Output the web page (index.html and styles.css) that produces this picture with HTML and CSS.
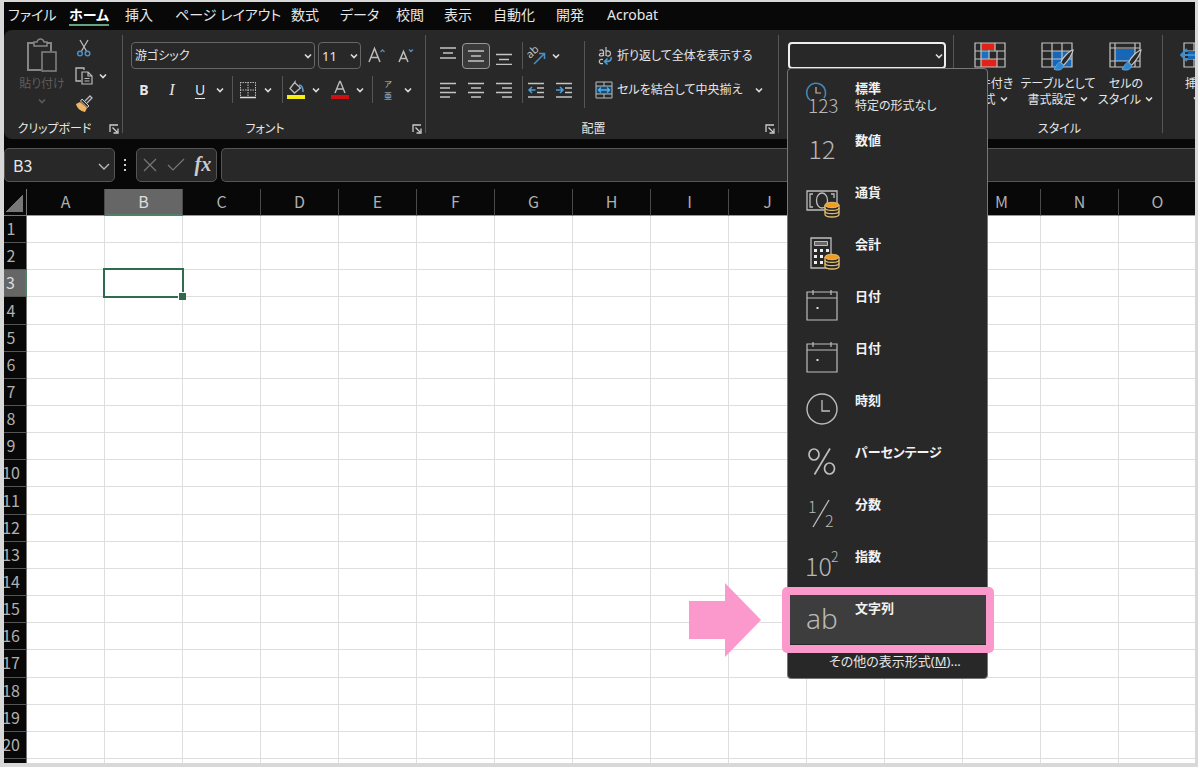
FILE: index.html
```html
<!DOCTYPE html>
<html lang="ja">
<head>
<meta charset="utf-8">
<title>表計算</title>
<link rel="stylesheet" href="styles.css">
</head>
<body>
<svg class="defs" aria-hidden="true">
  <symbol id="chev" viewBox="0 0 10 10"><path d="M2 3.5 5 6.5 8 3.5" fill="none" stroke="currentColor" stroke-width="1.6"/></symbol>
  <symbol id="chev-thin" viewBox="0 0 14 14"><path d="M2 5 7 10 12 5" fill="none" stroke="currentColor" stroke-width="1.4"/></symbol>
  <symbol id="launch" viewBox="0 0 10 10"><path d="M1 8V1h8M3.5 3.5 8 8M9 4.5V9H4.5" fill="none" stroke="#ccc" stroke-width="1.3"/></symbol>
  <symbol id="coins" viewBox="0 0 16 16"><path d="M1 3.500v9.500c0 3.300 14 3.300 14 0V3.500" fill="#282828" stroke="#e3bd6d" stroke-width="1.300"/><path d="M1 6.500c0 3.200 14 3.200 14 0M1 9.800c0 3.200 14 3.200 14 0" fill="none" stroke="#e3bd6d" stroke-width="1.300"/><ellipse cx="8" cy="3.500" rx="7" ry="2.700" fill="#f39c1f" stroke="#e3bd6d"/></symbol>
  <symbol id="calendar" viewBox="0 0 32 32"><path d="M1 3h30v28H1zM1 9h30M7 1v5M25 1v5" fill="none" stroke="#bdbdbd" stroke-width="1.200"/><rect x="10.500" y="18" width="2" height="2" fill="#ddd"/></symbol>
  <symbol id="brush" viewBox="0 0 22 24"><path d="M21 1C17 2 10 9 8 14l3 3C15 13 20 6 21 1z" fill="#282828" stroke="#c8c8c8" stroke-width="1.200"/><path d="M8 14c-4 0-4 4-7 7 4 2 10 1 10-4z" fill="#2f86cf" stroke="#5fa8e0"/></symbol>
</svg>
<main class="frame">
  <nav class="tabs">
    <a href="#">ファイル</a><a href="#" class="current">ホーム</a><a href="#">挿入</a><a href="#">ページ レイアウト</a><a href="#">数式</a><a href="#">データ</a><a href="#">校閲</a><a href="#">表示</a><a href="#">自動化</a><a href="#">開発</a><a href="#">Acrobat</a>
  </nav>

  <div class="ribbon">
    <section class="group clipboard">
      <div class="content">
        <button class="paste"><svg width="32" height="34" viewBox="0 0 32 34"><path d="M8 5H2v27h13M20 5h5v8" fill="none" stroke="#858585" stroke-width="2"/><path d="M8 8V4h3c1-4 6-4 7 0h3v4z" fill="#282828" stroke="#858585" stroke-width="1.500"/><rect x="16" y="14" width="14" height="19" fill="#282828" stroke="#858585" stroke-width="1.500"/></svg><span>貼り付け</span><svg class="chev"><use href="#chev"/></svg></button>
        <div class="clip-tools">
          <button aria-label="切り取り"><svg width="18" height="18" viewBox="0 0 18 18"><path d="M5 1 12 13M13 1 6 13" stroke="#bbb" stroke-width="1.300" fill="none"/><circle cx="5" cy="14.500" r="2.300" fill="none" stroke="#4c8fc4" stroke-width="1.500"/><circle cx="12.500" cy="14.500" r="2.300" fill="none" stroke="#4c8fc4" stroke-width="1.500"/></svg></button><i></i>
          <button aria-label="コピー"><svg width="18" height="18" viewBox="0 0 18 18"><path d="M6 14H1V1h8v2" fill="none" stroke="#bbb" stroke-width="1.300"/><path d="M7 5h6l4 4v8H7zM13 5v4h4M9.500 11.500h5M9.500 14h5" fill="none" stroke="#bbb" stroke-width="1.200"/></svg></button>
          <button aria-label="コピーのオプション"><svg class="chev"><use href="#chev"/></svg></button>
          <button aria-label="書式のコピー"><svg width="18" height="18" viewBox="0 0 18 18"><path d="M10 6 15 1l2 2-5 5" fill="none" stroke="#bbb" stroke-width="1.300"/><path d="m7 4 7 7-2 1.500L5.500 6z" fill="#333" stroke="#ccc"/><path d="M5 7 1 9c1 4 4 7 9 8l2-4z" fill="#efb562"/></svg></button><i></i>
        </div>
      </div>
      <footer><h2>クリップボード</h2><button aria-label="クリップボードの詳細"><svg width="10" height="10"><use href="#launch"/></svg></button></footer>
    </section>

    <section class="group font">
      <div class="content rows">
        <div class="row combos">
          <div class="combo family"><select aria-label="フォント"><option>游ゴシック</option></select><svg class="chev"><use href="#chev"/></svg></div>
          <div class="combo size"><select aria-label="サイズ"><option>11</option></select><svg class="chev"><use href="#chev"/></svg></div>
          <button class="w28" aria-label="拡大"><svg width="18" height="18" viewBox="0 0 18 18"><path d="M1 15 6.500 1.500 12 15M3 10.500h7" fill="none" stroke="#bbb" stroke-width="1.500"/><path d="m12.500 5 2-2 2 2" fill="none" stroke="#4c8fc4" stroke-width="1.300"/></svg></button>
          <button class="w28" aria-label="縮小"><svg width="18" height="18" viewBox="0 0 18 18"><path d="M2 15 6.500 4.500 11 15M3.500 11.500h6" fill="none" stroke="#bbb" stroke-width="1.500"/><path d="m12 2.500 2 2 2-2" fill="none" stroke="#4c8fc4" stroke-width="1.300"/></svg></button>
        </div>
        <div class="row">
          <button class="w28"><b>B</b></button><button class="w28"><em>I</em></button><button class="w28"><u>U</u></button><button class="w12" aria-label="下線の種類"><svg class="chev"><use href="#chev"/></svg></button>
          <span class="sep w12"></span>
          <button class="w20" aria-label="罫線"><svg width="18" height="18" viewBox="0 0 18 18"><path d="M1 1.500h16M1.500 1v15M16.500 1v15M9 1v15M1 9h16" stroke="#bbb" stroke-dasharray="1.500 1" fill="none"/><path d="M1 16.500h16" stroke="#ddd" stroke-width="1.500"/></svg></button><button class="w20" aria-label="罫線の種類"><svg class="chev"><use href="#chev"/></svg></button>
          <span class="sep w8"></span>
          <button class="w20" aria-label="塗りつぶし"><svg width="20" height="20" viewBox="0 0 20 20"><path d="M9 2 4 8.500 8.500 13l6-5L9 3z" fill="none" stroke="#bbb" stroke-width="1.300"/><path d="M13 5c3 0 4 3 4 7" fill="none" stroke="#5a9bd0" stroke-width="1.600"/><path d="M1 15h18v4H1z" fill="#f5ee10"/></svg></button><button class="w20" aria-label="塗りつぶしの色"><svg class="chev"><use href="#chev"/></svg></button>
          <button class="w28" aria-label="文字色"><svg width="20" height="20" viewBox="0 0 20 20"><path d="M5 13 9.700 1.500h.6L15 13M6.500 9h7" fill="none" stroke="#bbb" stroke-width="1.400"/><path d="M1 15h18v4H1z" fill="#d01010"/></svg></button><button class="w12" aria-label="文字色の選択"><svg class="chev"><use href="#chev"/></svg></button>
          <span class="sep w12"></span>
          <button class="w20 ruby" aria-label="ふりがな"><span>ア</span><span>亜</span></button><button class="w20" aria-label="ふりがなの設定"><svg class="chev"><use href="#chev"/></svg></button>
        </div>
      </div>
      <footer><h2>フォント</h2><button aria-label="フォントの詳細"><svg width="10" height="10"><use href="#launch"/></svg></button></footer>
    </section>

    <section class="group align">
      <div class="content">
        <div class="rows">
          <div class="row">
            <button class="w28" aria-label="上揃え"><svg width="16" height="18" viewBox="0 0 16 18"><path d="M0 1h16M3 6h10M0 11h16" stroke="#c4c4c4" stroke-width="1.300"/></svg></button>
            <button class="w28 pressed" aria-label="上下中央揃え"><svg width="16" height="18" viewBox="0 0 16 18"><path d="M0 4h16M3 9h10M0 14h16" stroke="#c4c4c4" stroke-width="1.300"/></svg></button>
            <button class="w28" aria-label="下揃え"><svg width="16" height="18" viewBox="0 0 16 18"><path d="M0 7.500h16M3 12.500h10M0 17.300h16" stroke="#c4c4c4" stroke-width="1.300"/></svg></button>
            <span class="sep w8"></span>
            <button class="w20" aria-label="方向"><svg width="20" height="20" viewBox="0 0 20 20"><text x="4" y="13" transform="rotate(-42 4 13)" class="ab">ab</text><path d="M8 18 18 8M13 7.500h5.500V13" fill="none" stroke="#4c8fc4" stroke-width="1.500"/></svg></button><button class="w20" aria-label="方向の選択"><svg class="chev"><use href="#chev"/></svg></button>
          </div>
          <div class="row">
            <button class="w28" aria-label="左揃え"><svg width="16" height="16" viewBox="0 0 16 16"><path d="M0 1.500h16M0 6h10M0 10.500h16M0 15h10" stroke="#c4c4c4" stroke-width="1.300"/></svg></button>
            <button class="w28" aria-label="中央揃え"><svg width="16" height="16" viewBox="0 0 16 16"><path d="M0 1.500h16M3 6h10M0 10.500h16M3 15h10" stroke="#c4c4c4" stroke-width="1.300"/></svg></button>
            <button class="w28" aria-label="右揃え"><svg width="16" height="16" viewBox="0 0 16 16"><path d="M0 1.500h16M6 6h10M0 10.500h16M6 15h10" stroke="#c4c4c4" stroke-width="1.300"/></svg></button>
            <span class="sep w8"></span>
            <button class="w20" aria-label="インデントを減らす"><svg width="16" height="16" viewBox="0 0 16 16"><path d="M0 1.500h16M9 6h7M9 10.500h7M0 15h16" stroke="#c4c4c4" stroke-width="1.300"/><path d="M7.500 8H1M4 5 1 8l3 3" fill="none" stroke="#4c9fd8" stroke-width="1.500"/></svg></button>
            <button class="w36" aria-label="インデントを増やす"><svg width="16" height="16" viewBox="0 0 16 16"><path d="M0 1.500h16M9 6h7M9 10.500h7M0 15h16" stroke="#c4c4c4" stroke-width="1.300"/><path d="M0 8h7M4 5l3 3-3 3" fill="none" stroke="#4c9fd8" stroke-width="1.500"/></svg></button>
          </div>
        </div>
        <span class="sep tall"></span>
        <div class="rows wide">
          <button class="row"><svg width="18" height="20" viewBox="0 0 18 20"><path d="M4.500 4.500c3-1.500 4 0 4 1.500v4M8.500 7c-5 0-5 3-2.500 3 1.500 0 2.500-1 2.500-2M11 1v9M11 6c1.500-2 4.500-1 4.500 1.500S12.500 11 11 9M8 13.500c-5-1.500-5 5.500 0 4" fill="none" stroke="#c4c4c4" stroke-width="1.200"/><path d="M16 11c1 4-2 4.500-6 4.500M12.500 12.500l-3 3 3 3" fill="none" stroke="#4c9fd8" stroke-width="1.500"/></svg><span>折り返して全体を表示する</span></button>
          <button class="row"><svg width="18" height="18" viewBox="0 0 18 18"><rect x="1" y="5" width="16" height="8" fill="#174a72"/><path d="M1 1h16v16H1zM1 5h16M1 13h16M9 1v4M9 13v4" fill="none" stroke="#bbb"/><path d="M3 9h12M6 6.500 3.500 9 6 11.500M12 6.500 14.500 9 12 11.500" fill="none" stroke="#55aeea" stroke-width="1.300"/></svg><span>セルを結合して中央揃え</span><svg class="chev"><use href="#chev"/></svg></button>
        </div>
      </div>
      <footer><h2>配置</h2><button aria-label="配置の詳細"><svg width="10" height="10"><use href="#launch"/></svg></button></footer>
    </section>

    <section class="group number">
      <div class="combo format"><select aria-label="表示形式"><option></option></select><svg class="chev"><use href="#chev"/></svg></div>
      <div class="menu" role="menu">
        <button role="menuitem"><svg width="34" height="36" viewBox="0 0 34 36"><path d="M5 20A9.500 9.500 0 1 1 19 18" fill="none" stroke="#4388b5" stroke-width="1.600"/><path d="M11 7v6h5" fill="none" stroke="#ccb8a8" stroke-width="1.200"/><text x="3" y="33" class="digits mid">123</text></svg><span><strong>標準</strong><small>特定の形式なし</small></span></button>
        <button role="menuitem"><svg width="34" height="34" viewBox="0 0 34 34"><text x="17" y="26" text-anchor="middle" class="digits">12</text></svg><span><strong>数値</strong></span></button>
        <button role="menuitem"><svg width="34" height="34" viewBox="0 0 34 34"><path d="M2 6h30v19H2zM8 9H5v13h3M26 9h3v4" fill="none" stroke="#bdbdbd" stroke-width="1.300"/><ellipse cx="17" cy="15.500" rx="5.500" ry="7.500" fill="none" stroke="#bdbdbd" stroke-width="1.300"/><use href="#coins" x="19" y="16" width="16" height="17"/></svg><span><strong>通貨</strong></span></button>
        <button role="menuitem"><svg width="34" height="34" viewBox="0 0 34 34"><path d="M6 1h20v30H6z" fill="none" stroke="#bdbdbd" stroke-width="1.300"/><path d="M9.500 4.500h13v4h-13z" fill="#666" stroke="#bdbdbd"/><path d="M9 13.500h15M9 19.500h15M9 25.500h15" stroke="#eee" stroke-width="3" stroke-dasharray="3"/><use href="#coins" x="19" y="16" width="16" height="17"/></svg><span><strong>会計</strong></span></button>
        <button role="menuitem"><svg width="32" height="34" viewBox="0 0 32 34"><use href="#calendar" width="32" height="32"/></svg><span><strong>日付</strong></span></button>
        <button role="menuitem"><svg width="32" height="34" viewBox="0 0 32 34"><use href="#calendar" width="32" height="32"/></svg><span><strong>日付</strong></span></button>
        <button role="menuitem"><svg width="32" height="34" viewBox="0 0 32 34"><circle cx="16" cy="16" r="15" fill="none" stroke="#bdbdbd" stroke-width="1.400"/><path d="M16 7v11h8" fill="none" stroke="#bdbdbd" stroke-width="1.300"/></svg><span><strong>時刻</strong></span></button>
        <button role="menuitem"><svg width="34" height="34" viewBox="0 0 34 34"><g fill="none" stroke="#bdbdbd" stroke-width="1.700"><ellipse cx="9" cy="9.500" rx="5" ry="5.500"/><ellipse cx="24.500" cy="23.500" rx="5" ry="5.500"/><path d="M25 3.500 9.500 29.500"/></g></svg><span><strong>パーセンテージ</strong></span></button>
        <button role="menuitem"><svg width="34" height="36" viewBox="0 0 34 36"><text x="3" y="17" class="digits tiny">1</text><path d="M24 4 8 31" stroke="#bdbdbd" stroke-width="1.300"/><text x="20" y="31" class="digits tiny">2</text></svg><span><strong>分数</strong></span></button>
        <button role="menuitem"><svg width="34" height="36" viewBox="0 0 34 36"><text x="0" y="28" class="digits">10</text><text x="26" y="14" class="digits exp">2</text></svg><span><strong>指数</strong></span></button>
        <button role="menuitem" class="target"><svg width="36" height="36" viewBox="0 0 36 36"><text x="18" y="29" text-anchor="middle" class="digits ab-big">ab</text></svg><span><strong>文字列</strong></span><svg class="arrow" width="74" height="74" viewBox="0 0 74 74"><path d="M1 18h36V0l36 37-36 37V56H1z" fill="#fb99cc"/></svg></button>
        <button role="menuitem" class="more">その他の表示形式(<u>M</u>)...</button>
      </div>
    </section>

    <section class="group styles">
      <div class="content">
        <button class="big"><svg width="32" height="26" viewBox="0 0 32 26"><path d="M7 1h14v7H7zM7 17h16v8H7z" fill="#e02318"/><path d="M7 9h8v8H7z" fill="#1b6ec2"/><path d="M1 1h30v24H1zM1 9h30M1 17h30M7 1v24M15 8v9M21 1v8M23 9v16" fill="none" stroke="#c4c4c4" stroke-width="1.200"/></svg><span>条件付き</span><span>書式 <svg class="chev"><use href="#chev"/></svg></span></button>
        <button class="big"><svg width="34" height="30" viewBox="0 0 34 30"><path d="M11 9h20v16H11z" fill="#1667b7"/><path d="M1 1h30v24H1zM1 9h30M1 17h30M11 1v24M21 1v24" fill="none" stroke="#c4c4c4" stroke-width="1.200"/><use href="#brush" x="11" y="7" width="23" height="23"/></svg><span>テーブルとして</span><span>書式設定 <svg class="chev"><use href="#chev"/></svg></span></button>
        <button class="big"><svg width="34" height="30" viewBox="0 0 34 30"><path d="M6 7h20v12H6z" fill="#1667b7"/><path d="M1 1h30v24H1zM1 6h30M1 19h30M6 1v24M26 1v24" fill="none" stroke="#c4c4c4" stroke-width="1.200"/><use href="#brush" x="11" y="7" width="23" height="23"/></svg><span>セルの</span><span>スタイル <svg class="chev"><use href="#chev"/></svg></span></button>
      </div>
      <footer><h2>スタイル</h2></footer>
    </section>

    <section class="group cells">
      <div class="content">
        <button class="big"><svg width="38" height="26" viewBox="0 0 38 26"><path d="M6 1h30v24H6zM6 9h30M6 17h30M16 1v24M26 1v24" fill="none" stroke="#c4c4c4" stroke-width="1.200"/><path d="M10 9h26v8H10z" fill="#1667b7"/><path d="M22 13H3M9 7l-6 6 6 6" fill="none" stroke="#3b8fd0" stroke-width="1.800"/></svg><span>挿入</span><span><svg class="chev"><use href="#chev"/></svg></span></button>
      </div>
    </section>
  </div>

  <div class="formula-bar">
    <div class="combo name"><input aria-label="名前ボックス" value="B3"><svg width="14" height="14"><use href="#chev-thin"/></svg></div>
    <svg class="dots" width="4" height="14" viewBox="0 0 4 14"><path d="M1 1h2v2H1zM1 6h2v2H1zM1 11h2v2H1z" fill="#ccc"/></svg>
    <div class="fx">
      <button aria-label="キャンセル"><svg width="16" height="16" viewBox="0 0 16 16"><path d="m2 2 12 12M14 2 2 14" stroke="#777" stroke-width="1.200"/></svg></button>
      <button aria-label="入力"><svg width="18" height="16" viewBox="0 0 18 16"><path d="m1 8 5 5L17 2" fill="none" stroke="#777" stroke-width="1.200"/></svg></button>
      <button class="fn">fx</button>
    </div>
    <input class="formula" aria-label="数式バー">
  </div>

  <table class="sheet"><thead></thead><tbody></tbody></table>
</main>
<script src="sheet.js"></script>
</body>
</html>
```

FILE: sheet.js
```js
const columns = [..."ABCDEFGHIJKLMNO"];
const rowCount = 21;
const active = { column: "B", row: 3 };

function cell(tag, text, className) {
  const el = document.createElement(tag);
  if (text) el.textContent = text;
  if (className) el.className = className;
  return el;
}

const head = document.createElement("tr");
const corner = cell("td", "", "corner");
head.append(corner);
for (const c of columns) {
  head.append(cell("th", c, c === active.column ? "active" : ""));
}
document.querySelector(".sheet thead").append(head);

const body = document.querySelector(".sheet tbody");
for (let r = 1; r <= rowCount; r++) {
  const tr = document.createElement("tr");
  tr.append(cell("th", r < rowCount ? String(r) : "", r === active.row ? "active" : ""));
  for (const c of columns) {
    const selected = r === active.row && c === active.column;
    tr.append(cell("td", "", selected ? "selected" : ""));
  }
  body.append(tr);
}
```

FILE: styles.css
```css
* { box-sizing: border-box; }

body {
  margin: 0;
  background: #fff;
  color: #e6e6e6;
  font: 12px/16px "Noto Sans", "Noto Sans CJK JP", sans-serif;
  font-feature-settings: "palt";
}

button, input, select {
  margin: 0;
  padding: 0;
  border: 0;
  background: none;
  color: inherit;
  font: inherit;
  font-feature-settings: inherit;
}

svg { flex: none; overflow: visible; }
h2 { margin: 0; font-size: 12px; font-weight: 400; }
.defs { position: absolute; width: 0; height: 0; }
.chev { width: 10px; height: 10px; color: #ddd; }

.frame {
  display: flex;
  flex-direction: column;
  height: calc(100vh - 1px);
  min-height: 700px;
  margin-right: 2px;
  border: solid #d8d8d8;
  border-width: 2px 3px 4px 4px;
  background: #080808;
  overflow: hidden;
}

/* Tabs */
.tabs {
  display: grid;
  flex: none;
  grid-template-columns: 61px 56px 50px 116px 49px 56px 48px 49px 63px 51px auto;
  height: 28px;
  padding-left: 4px;
  font-size: 14px;
}
.tabs a {
  justify-self: start;
  height: 24px;
  color: #e6e6e6;
  line-height: 26px;
  text-decoration: none;
  white-space: nowrap;
}
.tabs .current {
  border-bottom: 2px solid #63a37d;
  color: #fff;
  font-weight: 700;
}

/* Ribbon */
.ribbon {
  position: relative;
  z-index: 1;
  display: flex;
  flex: none;
  height: 109px;
  border-radius: 8px 0 0 8px;
  background: #282828;
}
.group {
  position: relative;
  display: flex;
  flex: none;
  flex-direction: column;
  padding-top: 12px;
}
.group::after {
  content: "";
  position: absolute;
  top: 5px;
  right: 0;
  bottom: 6px;
  width: 1px;
  background: #555;
}
.group button {
  display: flex;
  align-items: center;
  justify-content: center;
}
.content { display: flex; flex: 1; }
.group footer {
  display: grid;
  grid-template-columns: 1fr 18px;
  align-items: center;
  height: 20px;
}
.group h2 { text-align: center; }

.clipboard { width: 119px; padding-top: 8px; }
.clipboard .paste {
  flex-direction: column;
  justify-content: flex-start;
  width: 70px;
  padding-left: 6px;
  color: #5c5c5c;
}
.paste svg { margin-bottom: 4px; }
.paste .chev { margin-top: 4px; color: #5c5c5c; }
.clip-tools {
  display: grid;
  grid-template-columns: 20px 18px;
  grid-template-rows: repeat(3, 28px);
  margin-top: -4px;
}

.font { width: 303px; padding-left: 7px; }
.font footer, .align footer { margin-left: -8px; }
.rows { display: flex; flex-direction: column; gap: 7px; }
.row { display: flex; align-items: center; height: 27px; }
.w8 { width: 8px; }
.w12 { width: 12px; }
.w20 { width: 20px; }
.w28 { width: 28px; }
.w36 { width: 36px; }
.row > button { height: 26px; font-size: 14px; }
.row > button u { text-underline-offset: 3px; }
.row em { font-family: "Liberation Serif", serif; font-size: 16px; }
.sep {
  align-self: stretch;
  background: linear-gradient(#555, #555) center / 1px 100% no-repeat;
}
.row > .ruby { flex-direction: column; font: 8px/12px "Noto Sans CJK JP", sans-serif; color: #bbb; }

.combo { position: relative; display: flex; height: 27px; }
.combo select, .combo input {
  width: 100%;
  padding: 0 3px;
  border: 1px solid #666;
  border-radius: 4px;
  appearance: none;
}
.combo svg { position: absolute; top: 9px; right: 2px; pointer-events: none; }
.combos { gap: 3px; }
.combos .w28 { width: 26px; }
.family { width: 184px; margin-left: 1px; }
.size { width: 43px; }
.size select { font-size: 13px; }

.align { width: 353px; padding-left: 8px; }
.pressed { border: 1px solid #999; border-radius: 4px; background: #3a3a3a; }
.sep.tall { width: 5px; margin: -1px 8px 0 0; height: 67px; }
.wide button.row { justify-content: flex-start; gap: 4px; }
.wide .chev { margin-left: 8px; }
.ab { fill: #c4c4c4; font-size: 11px; }

.number { width: 175px; padding-left: 9px; }
.format { width: 158px; }
.format select { border: 2px solid #eee; }

/* Number format menu */
.menu {
  position: absolute;
  top: 38px;
  left: 8px;
  width: 201px;
  padding-top: 3px;
  border: 1px solid #777;
  border-radius: 4px;
  background: #282828;
  z-index: 2;
}
.menu button {
  position: relative;
  display: grid;
  grid-template-columns: 67px 1fr;
  justify-items: center;
  width: 100%;
  height: 52px;
}
.menu button > span {
  display: flex;
  flex-direction: column;
  align-self: start;
  justify-self: start;
  padding-top: 7px;
  line-height: 18px;
  text-align: left;
}
.menu strong { color: #f2f2f2; font-size: 13px; }
.menu small { font-size: 12px; }
.digits {
  fill: #b8b8b8;
  font: 300 25px "Noto Sans CJK JP", sans-serif;
}
.digits.mid { font-size: 19px; }
.digits.tiny { font-size: 16px; }
.digits.exp { font-size: 14px; }
.digits.ab-big { font: 300 28px "Noto Sans", sans-serif; }
.menu .target { background: #3d3d3d; }
.target::after {
  content: "";
  position: absolute;
  inset: -5px -7px -9px -6px;
  border: 8px solid #fb99cc;
  border-radius: 5px;
}
.menu .arrow { position: absolute; top: -9px; left: -100px; }
.menu .more {
  display: block;
  height: 34px;
  padding-left: 41px;
  font-size: 13px;
  text-align: left;
}

.styles { width: 209px; padding-left: 2px; }
.styles footer { grid-template-columns: 1fr; }
.group .big {
  flex-direction: column;
  justify-content: flex-start;
  width: 68px;
  white-space: nowrap;
}
.big > svg { height: 30px; margin-bottom: 4px; }
.big > svg[height="26"] { height: 26px; margin-bottom: 8px; }
.cells { width: 80px; }

/* Formula bar */
.formula-bar {
  display: flex;
  flex: none;
  align-items: center;
  height: 34px;
  margin: 9px 0 7px;
}
.formula-bar input, .fx {
  height: 34px;
  border: 1px solid #555;
  border-radius: 5px;
  background: #282828;
}
.name { width: 111px; height: 34px; }
.name input { padding: 0 8px; font-size: 16px; font-family: "Noto Sans CJK JP", sans-serif; }
.name svg { top: 11px; right: 4px; color: #bbb; }
.dots { margin: 0 9px 0 8px; }
.fx { display: flex; align-items: center; justify-content: space-around; width: 81px; margin-right: 4px; }
.fx button { display: flex; }
.fx .fn { padding-bottom: 3px; font: italic 700 20px/20px "Liberation Serif", serif; color: #ccc; }
.formula { flex: 1; min-width: 0; padding: 0 8px; }
.formula-bar .formula { border-right: 0; border-radius: 5px 0 0 5px; }

/* Sheet: header, equal rows, and the top of the next row */
.sheet {
  display: grid;
  flex: 1;
  grid-template-columns: 23px repeat(15, 78px);
  grid-template-rows: 27px repeat(20, 1fr) 4px;
  min-height: 0;
  color: #b0b0b0;
  font: 16px/24px "Noto Sans CJK JP", sans-serif;
}
.sheet thead, .sheet tbody, .sheet tr { display: contents; }
.sheet th, .sheet td { min-width: 0; min-height: 0; padding: 0; font-weight: 400; }
.sheet td { border: solid #dedede; border-width: 0 1px 1px 0; background: #fff; }
.sheet th { display: flex; align-items: center; justify-content: center; padding-bottom: 2px; }
.sheet thead th { border-right: 1px solid #4a4a4a; border-bottom: 1px solid #999; }
.sheet tbody th {
  padding-right: 8px;
  border-right: 1px solid #777;
  border-bottom: 1px solid #555;
  overflow: hidden;
}
.sheet tbody tr:last-child > * { border-bottom: 0; }
.sheet thead .active { padding-bottom: 1px; border-bottom: 2px solid #4f8265; background: #666; color: #ddd; }
.sheet tbody .active { border-right: 2px solid #4f8265; background: #666; color: #ddd; }
.sheet .corner {
  border: solid #777;
  border-width: 0 1px 1px 0;
  background: linear-gradient(135deg, transparent 50%, #777 50%) 1px 5px / 18px 18px no-repeat #080808;
}
.selected { position: relative; }
.selected::before {
  content: "";
  position: absolute;
  inset: -2px;
  border: 2px solid #2f6b4d;
}
.selected::after {
  content: "";
  position: absolute;
  right: -4px;
  bottom: -4px;
  width: 7px;
  height: 7px;
  border: solid #fff;
  border-width: 1px 0 0 1px;
  background: #2f6b4d;
}
```
